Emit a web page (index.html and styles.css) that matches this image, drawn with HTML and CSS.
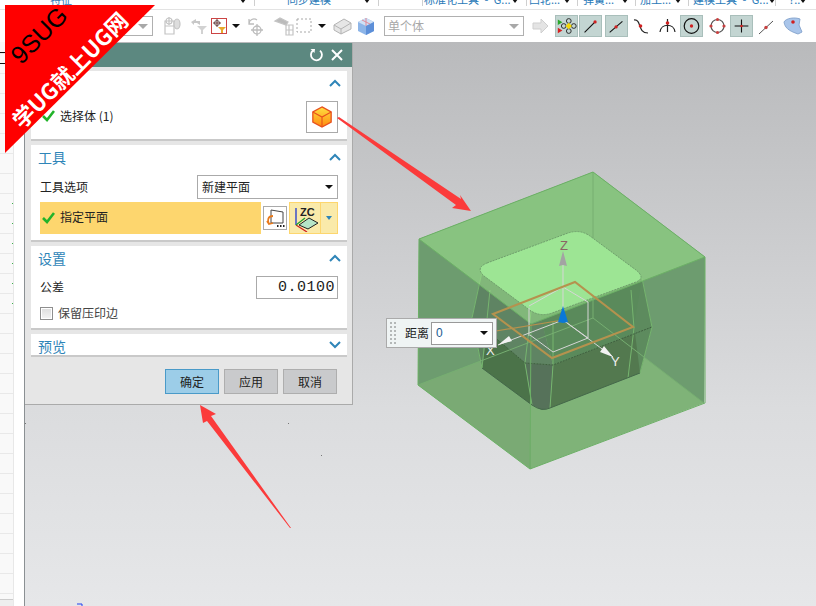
FILE: index.html
```html
<!DOCTYPE html>
<html lang="zh">
<head>
<meta charset="utf-8">
<title>修剪体</title>
<link rel="stylesheet" href="styles.css">
</head>
<body>
<div class="app">
  <div class="tabs">
    <div class="tab t1"><span class="tab-label">特征</span><i class="caret"></i></div>
    <div class="tab t2"><span class="tab-label">同步建模</span><i class="caret"></i></div>
    <div class="tab t3"></div>
    <div class="tab t4"><span class="tab-label">标准化工具 - G...</span><i class="caret"></i></div>
    <div class="tab t5"><span class="tab-label">凹轮...</span><i class="caret"></i></div>
    <div class="tab t6"><span class="tab-label">弹簧...</span><i class="caret"></i></div>
    <div class="tab t7"><span class="tab-label">加工...</span><i class="caret"></i></div>
    <div class="tab t8"><span class="tab-label">建模工具 - G...</span><i class="caret"></i></div>
    <div class="tab t9"><span class="tab-label">?..</span><i class="caret"></i></div>
  </div>

  <div class="toolbar">
    <div class="combo combo-a"><i class="caret gray"></i></div>
    <span class="ic ml7"><svg width="24" height="22" viewBox="0 0 24 22" fill="none" stroke="#c4c4c4" stroke-width="1.2"><path d="M5 6h9v13H5zM5 11h9M9 2v8"/><circle cx="9" cy="6" r="3"/><ellipse cx="17" cy="9" rx="3" ry="5" fill="#ddd"/></svg></span>
    <span class="ic ml2"><svg width="24" height="22" viewBox="0 0 24 22"><path d="M5 7l5-3v2h4v4l-3-2H8v2z" fill="#c8c8c8"/><path d="M11 11h10l-4 4v4h-2v-4z" fill="#d2d2d2"/></svg></span>
    <span class="ic-red ml1"><svg width="14" height="14" viewBox="0 0 14 14"><circle cx="5" cy="4" r="2.5" fill="none" stroke="#6b5a5a"/><path d="M5 0v8M1 4h8" stroke="#6b3b3b"/><path d="M6 8h8l-3 3v3H9v-3z" fill="#e8a92c"/></svg></span>
    <i class="caret ml5"></i>
    <span class="ic ml4"><svg width="24" height="22" viewBox="0 0 24 22" fill="none" stroke="#bdbdbd" stroke-width="1.3"><path d="M5 9a5 5 0 0 1 8-4M5 4v5h5"/><circle cx="13" cy="15" r="4"/><path d="M13 9v12M7 15h12"/></svg></span>
    <span class="ic ml4"><svg width="24" height="22" viewBox="0 0 24 22" fill="none" stroke="#c4c4c4" stroke-width="1.2"><path d="M3 6l5-3 8 4-2 3z" fill="#bbb"/><path d="M14 10h7v10h-7zM17 10v10M14 15h7"/></svg></span>
    <span class="ic-plain"><svg width="16" height="22" viewBox="0 0 16 22" fill="none" stroke="#a8a8a8"><path d="M1 4h14v13H1z" stroke-dasharray="2 2"/></svg></span>
    <i class="caret ml6"></i>
    <span class="ic ml4"><svg width="24" height="22" viewBox="0 0 24 22"><path d="M4 10l10-6 7 4v6l-10 5-7-4z" fill="#e6e6e6" stroke="#b4b4b4"/><path d="M4 10l7 4 10-6M11 14v5" fill="none" stroke="#b4b4b4"/></svg></span>
    <span class="ic"><svg width="24" height="22" viewBox="0 0 24 22"><path d="M4 7l8-4 8 4v9l-8 4-8-4z" fill="#8db5e8"/><path d="M4 7l8 4 8-4-8-4z" fill="#cfe0f5"/><path d="M12 11v9l8-4V7z" fill="#5d8fd8"/><path d="M8 5l8 4M12 3v8" stroke="#e08a9a" fill="none"/></svg></span>
    <div class="combo combo-b ml6"><span>单个体</span><i class="caret gray"></i></div>
    <span class="ic ml4"><svg width="24" height="22" viewBox="0 0 24 22"><path d="M5 8h8V4l7 7-7 7v-4H5z" fill="#e4e4e4" stroke="#cfcfcf"/></svg></span>
    <span class="ic on ml3"><svg width="23" height="22" viewBox="0 0 23 22"><path d="M2 4l5 3-5 3z" fill="#2aa82a"/><path d="M2 13l5 3-5 3z" fill="#d62020"/><g fill="none" stroke="#222"><circle cx="14" cy="5.500" r="2.600"/><circle cx="14" cy="16.500" r="2.600"/><circle cx="8.500" cy="11" r="2.600"/><circle cx="19.500" cy="11" r="2.600"/></g><path d="M14 7.500l3.500 3.500-3.500 3.500-3.500-3.500z" fill="#f5d90a"/></svg></span>
    <span class="ic on ml1"><svg width="23" height="22" viewBox="0 0 23 22"><path d="M5 18L16 7" stroke="#111" stroke-width="1.200"/><circle cx="16.500" cy="6.500" r="1.800" fill="#d02020"/></svg></span>
    <span class="ic on ml3"><svg width="23" height="22" viewBox="0 0 23 22"><path d="M4 18L18 6" stroke="#111" stroke-width="1.200"/><circle cx="11" cy="12" r="1.800" fill="#d02020"/></svg></span>
    <span class="ic ml1"><svg width="23" height="22" viewBox="0 0 23 22"><path d="M4 5c8-1 3 13 14 13" fill="none" stroke="#222" stroke-width="1.200"/><circle cx="10.500" cy="11" r="1.800" fill="#d02020"/></svg></span>
    <span class="ic ml2"><svg width="23" height="22" viewBox="0 0 23 22"><path d="M4 17c1-9 14-9 15 0M11.500 4v13" fill="none" stroke="#222" stroke-width="1.200"/><circle cx="11.500" cy="8" r="1.800" fill="#d02020"/></svg></span>
    <span class="ic on ml1"><svg width="23" height="22" viewBox="0 0 23 22"><circle cx="11.500" cy="11" r="8" fill="none" stroke="#111" stroke-width="1.300"/><circle cx="11.500" cy="11" r="1.800" fill="#d02020"/></svg></span>
    <span class="ic ml2"><svg width="23" height="22" viewBox="0 0 23 22"><circle cx="11.500" cy="11" r="6.500" fill="none" stroke="#555" stroke-width="1.200"/><g fill="#c84040"><circle cx="11.500" cy="4.500" r="1.600"/><circle cx="11.500" cy="17.500" r="1.600"/><circle cx="5" cy="11" r="1.600"/><circle cx="18" cy="11" r="1.600"/></g></svg></span>
    <span class="ic on ml1"><svg width="23" height="22" viewBox="0 0 23 22"><path d="M11.500 4v14M4 11h15" stroke="#111" stroke-width="1.200"/><circle cx="11.500" cy="11" r="1.500" fill="#d02020"/></svg></span>
    <span class="ic ml2"><svg width="23" height="22" viewBox="0 0 23 22"><path d="M3 19L17 6" stroke="#555"/><circle cx="10" cy="12.500" r="1.700" fill="#c84040"/></svg></span>
    <span class="ic ml2"><svg width="24" height="22" viewBox="0 0 24 22"><path d="M3 7c2-4 11-5 16-3l-1 6 3 7-4 2C12 17 4 15 3 7z" fill="#a9c5ea" stroke="#8aa8d0"/><circle cx="12" cy="7" r="1.800" fill="#d02020"/></svg></span>
  </div>

  <div class="main">
    <aside class="side">
      <div class="side-grid"><i class="rule r1"></i><i class="rule r2"></i></div>
      <div class="side-strip"></div>
    </aside>
    <div class="view">
      <svg class="scene" viewBox="25 42 791 564" width="791" height="564">
        <!-- outer block -->
        <polygon points="419,239 593,172 705,257 704,403 530,469 418,385" fill="#7fb378"/>
        <polygon points="418,385 593,318 704,403 705,257 593,172 419,239" fill="#6d9c6f"/>
        <polygon points="418,385 531,342 531,469" fill="#7aaa74"/>
        <!-- inner body -->
        <polygon points="482,272 540,315 553,365 525,363 472,318" fill="#5f8463"/>
        <polygon points="540,315 642,278 652,327 553,365" fill="#5a8a5b"/>
        <polygon points="472,318 525,363 532,405 482,368" fill="#4b7349"/>
        <polygon points="525,363 553,365 550,408 542,410 532,405" fill="#56725a"/>
        <polygon points="553,365 652,327 640,373 550,408" fill="#53794f"/>
        <polygon points="472,318 482,272 490,320 482,368" fill="#5e8463" opacity=".8"/>
        <polygon points="642,278 652,327 640,373 634,325" fill="#5d8b5e"/>
        <g fill="none" stroke="#76b56f" stroke-width="1">
          <path d="M482 272L472 318L482 368M642 278L652 327L640 373M531 312L525 363L532 405M553 322L553 365L550 408M490 290L482 368M631 290L634 328L628 378"/>
          <path d="M472 318L525 363L553 365L652 327" stroke="#3f5f3f" stroke-dasharray="2 1"/>
          <path d="M482 368L532 405Q542 412 550 408L640 373" stroke="#44684a"/>
        </g>
        <!-- translucent top of block -->
        <polygon points="419,239 593,172 705,257 531,324" fill="#a3ea91" opacity=".5"/>
        <path d="M593 172V318M418 385L593 318L704 403" fill="none" stroke="#76ae71" stroke-width="1"/>
        <path d="M419 239L593 172L705 257V403L530 469L418 385ZM419 239L531 324L705 257M531 324L530 469" fill="none" stroke="#6cb066" stroke-width="1"/>
        <!-- top face of body -->
        <path d="M487 263L568 233Q580 229 590 236L636 270Q646 278 636 282L552 313Q541 317 531 311L484 276Q475 268 487 263Z" fill="#9de594" stroke="#6f9f6c" stroke-dasharray="2 1"/>
        <!-- csys -->
        <g fill="none" stroke="#d6d6d6" stroke-width="1">
          <path d="M563 265V320M529 308V336M529 306L563 287L588 302V338L553 352L530 335M563 320L588 338M563 320L498 345M563 320L613 357"/>
        </g>
        <path d="M493 314L575 282L633 327L552 358Z" fill="none" stroke="#b5924e" stroke-width="2"/>
        <path d="M563 320L490 332" stroke="#b5924e" stroke-width="1.200"/>
        <polygon points="563,251 567,266 563,265 559,266" fill="#a3a3a3"/>
        <polygon points="563,306 568,322 563,323 558,322" fill="#0a78d8"/>
        <polygon points="498,345 509,336 512,341" fill="#f2f2f2"/>
        <polygon points="613,357 600,352 604,346" fill="#f2f2f2"/>
        <text class="axis az" x="560" y="250">Z</text>
        <text class="axis ay" x="611" y="366">Y</text>
        <text class="axis ay" x="486" y="355">X</text>
        <!-- dots -->
        <g fill="#777"><rect x="25" y="423" width="1" height="1"/><rect x="288" y="423" width="1" height="1"/><rect x="321" y="455" width="1" height="1"/></g>
        <path d="M77 604h5v2" fill="none" stroke="#2040f0"/>
      </svg>

      <div class="float">
        <span class="grip"></span>
        <span class="float-label">距离</span>
        <div class="float-select"><span>0</span><i class="caret"></i></div>
      </div>

      <section class="dialog">
        <header class="dlg-title">
          <svg width="16" height="16" viewBox="0 0 16 16"><path d="M5 3.500A5.500 5.500 0 1 0 12 3.600" fill="none" stroke="#fff" stroke-width="1.800"/><path d="M2.500 2l4.500 0 -.5 4z" fill="#fff"/></svg>
          <svg width="14" height="14" viewBox="0 0 14 14"><path d="M2 2l10 10M12 2L2 12" stroke="#fff" stroke-width="2"/></svg>
        </header>
        <div class="panel p-body">
          <div class="panel-head"><span class="panel-title"></span><svg class="chev" width="12" height="8" viewBox="0 0 12 8"><path d="M1 7l5-5 5 5" fill="none" stroke="#2f85b8" stroke-width="2"/></svg></div>
          <div class="row row-body">
            <span class="check"><svg width="13" height="12" viewBox="0 0 13 12"><path d="M1 6l4 4 7-9" fill="none" stroke="#22b32a" stroke-width="2.600"/></svg></span>
            <span class="label">选择体 (1)</span>
            <span class="pick"><svg width="22" height="24" viewBox="0 0 24 24"><defs><linearGradient id="cube" x1="0" y1="0" x2="0" y2="1"><stop offset="0" stop-color="#ffe040"/><stop offset="1" stop-color="#ff8a10"/></linearGradient></defs><path d="M12 1l10 5.500v11L12 23 2 17.500v-11z" fill="url(#cube)" stroke="#e8501c" stroke-width="1.400"/><path d="M2 6.500l10 5.500 10-5.500M12 12v11" fill="none" stroke="#e8501c" stroke-width="1.200"/></svg></span>
          </div>
        </div>
        <div class="panel p-tool">
          <div class="panel-head"><span class="panel-title">工具</span><svg class="chev" width="12" height="8" viewBox="0 0 12 8"><path d="M1 7l5-5 5 5" fill="none" stroke="#2f85b8" stroke-width="2"/></svg></div>
          <div class="row row-opt">
            <span class="label">工具选项</span>
            <div class="select"><span class="label">新建平面</span><i class="caret"></i></div>
          </div>
          <div class="row row-plane">
            <div class="plane-bar">
              <svg width="13" height="12" viewBox="0 0 13 12"><path d="M1 6l4 4 7-9" fill="none" stroke="#22b32a" stroke-width="2.600"/></svg>
              <span class="label">指定平面</span>
            </div>
            <span class="plane-btn"><svg width="22" height="22" viewBox="0 0 22 22"><path d="M7 3l12 2v11H7z" fill="#fff" stroke="#444"/><path d="M9 9C4 9 3 13 5 17l4-1M5 17l-2-3" fill="none" stroke="#e87a1c" stroke-width="1.800"/><path d="M13 19h1.500M16 19h1.500M19 19h1.500" stroke="#222" stroke-width="1.800"/></svg></span>
            <div class="plane-split">
              <span class="zc"><svg width="28" height="28" viewBox="0 0 28 28"><path d="M5 4v17" stroke="#2038d0" stroke-width="1.300"/><path d="M5 21l11 7" stroke="#d02020" stroke-width="1.300"/><path d="M5 21l9-7" stroke="#22a030" stroke-width="1.300"/><path d="M8 21l10-7 9 5-10 6z" fill="#b5e5c8" stroke="#222"/><text class="zc-text" x="9" y="12">ZC</text></svg></span>
              <span class="zc-drop"><i class="caret blue"></i></span>
            </div>
          </div>
        </div>
        <div class="panel p-set">
          <div class="panel-head"><span class="panel-title">设置</span><svg class="chev" width="12" height="8" viewBox="0 0 12 8"><path d="M1 7l5-5 5 5" fill="none" stroke="#2f85b8" stroke-width="2"/></svg></div>
          <div class="row row-tol">
            <span class="label">公差</span>
            <div class="input"><span>0.0100000</span></div>
          </div>
          <label class="row row-chk"><span class="box"></span><span class="label muted">保留压印边</span></label>
        </div>
        <div class="panel p-prev">
          <div class="panel-head"><span class="panel-title">预览</span><svg class="chev" width="12" height="8" viewBox="0 0 12 8"><path d="M1 1l5 5 5-5" fill="none" stroke="#2f85b8" stroke-width="2"/></svg></div>
        </div>
        <footer class="actions">
          <button class="btn primary">确定</button>
          <button class="btn">应用</button>
          <button class="btn">取消</button>
        </footer>
      </section>

      <!-- red callout arrows lie over the dialog and the model -->
      <svg class="scene" viewBox="25 42 791 564" width="791" height="564">
        <polygon points="337,118 339,117 461,199 460,195 471,211 452,208 456,205" fill="#fb3b3b"/>
        <polygon points="291,528 290,528 207,421 203,423 200,405 216,414 211,416" fill="#fb3b3b"/>
      </svg>
    </div>
  </div>

  <div class="banner">
    <span class="b-top">9SUG</span>
    <span class="b-main">学UG就上UG网</span>
  </div>
</div>
</body>
</html>
```

FILE: styles.css
```css
* { box-sizing: border-box; }
html, body { margin: 0; padding: 0; }
body {
  width: 816px;
  height: 606px;
  overflow: hidden;
  background: #fff;
  font-family: "Noto Sans CJK SC", "Liberation Sans", sans-serif;
  font-size: 12px;
  color: #222;
}
.app { position: relative; width: 816px; height: 606px; display: flex; flex-direction: column; overflow: hidden; }

.caret { display: inline-block; width: 0; height: 0; border-left: 4px solid transparent; border-right: 4px solid transparent; border-top: 4px solid #111; flex: none; }
.caret.gray { border-top-color: #a8a8a8; border-left-width: 5px; border-right-width: 5px; border-top-width: 5px; }
.caret.blue { border-top-color: #2f85b8; border-left-width: 3px; border-right-width: 3px; border-top-width: 4px; }

/* ribbon tabs, clipped at the top of the crop */
.tabs { height: 10px; flex: none; display: flex; overflow: hidden; border-bottom: 1px solid #e3e3e3; background: #fff; }
.tab { height: 6px; display: flex; align-items: flex-end; border-right: 1px solid #cfcfcf; position: relative; flex: none; overflow: hidden; }
.tab-label { font-size: 11px; line-height: 14px; color: #2a7ab8; white-space: nowrap; flex: none; word-spacing: 3px; }
.tab .caret { margin-left: auto; margin-bottom: 3px; border-left-width: 3px; border-right-width: 3px; }
.t1 { width: 255px; padding: 0 8px 0 50px; }
.t2 { width: 124px; padding: 0 8px 0 32px; }
.t3 { width: 44px; }
.t4 { width: 104px; padding: 0 8px 0 1px; }
.t5 { width: 51px; padding: 0 7px 0 2px; }
.t6 { width: 58px; padding: 0 7px 0 5px; }
.t7 { width: 53px; padding: 0 7px 0 4px; }
.t8 { width: 87px; padding: 0 7px 0 4px; }
.t9 { flex: 1; border-right: 0; padding: 0 10px 0 13px; }

/* toolbar */
.toolbar { height: 32px; flex: none; display: flex; align-items: center; padding-left: 40px; background: #fff; }
.combo { height: 20px; border: 1px solid #b0b0b0; background: #fff; display: flex; align-items: center; justify-content: flex-end; padding: 0 4px 0 3px; color: #a8a8a8; flex: none; }
.combo span { margin-right: auto; line-height: 18px; }
.combo-a { width: 113px; }
.combo-b { width: 140px; }
.ic { width: 24px; height: 22px; display: flex; align-items: center; justify-content: center; flex: none; }
.ic.on { width: 23px; background: #c3d5d2; border: 1px solid #a9bfbb; }
.ic-red { width: 16px; height: 16px; border: 1px solid #c44; display: flex; align-items: center; justify-content: center; flex: none; }
.ic-plain { width: 16px; height: 22px; display: flex; align-items: center; flex: none; }
.ml1 { margin-left: 1px; } .ml2 { margin-left: 2px; } .ml3 { margin-left: 3px; }
.ml4 { margin-left: 4px; } .ml5 { margin-left: 5px; } .ml6 { margin-left: 6px; } .ml7 { margin-left: 7px; }

/* workspace */
.main { flex: 1; display: flex; min-height: 0; }
.side { width: 25px; flex: none; display: flex; background: #fff; border-right: 1px solid #8b9093; }
.side-grid {
  width: 14px; position: relative;
  border-right: 1px solid #e8e8e8;
  background: linear-gradient(to bottom, #f9f9f9 0, #f9f9f9 19px, #e9e9e9 19px, #e9e9e9 20px) 0 12px / 100% 20px;
}
.side-grid::after {
  content: ""; position: absolute; left: 12px; top: 161px; width: 1px; height: 102px;
  background: repeating-linear-gradient(to bottom, #3cb04a 0, #3cb04a 1px, transparent 1px, transparent 20px);
}
.side-grid::before {
  content: ""; position: absolute; left: 0; bottom: 0; width: 13px; height: 6px;
  background: #eee; border-top: 1px solid #ccc;
}
.side-strip { flex: 1; background: #fff; }
.rule { position: absolute; left: 0; width: 5px; height: 1px; background: #111; }
.r1 { top: 10px; } .r2 { top: 21px; }

.view { flex: 1; position: relative; background: linear-gradient(to bottom, #b9babc 0, #c6c7c9 25%, #dbdcde 65%, #e6e7e9 100%); }
.scene { position: absolute; left: 0; top: 0; display: block; pointer-events: none; }
.axis { font: 13px "Liberation Sans", sans-serif; }
.az { fill: #8a6464; }
.ay { fill: #eee; }

/* distance popup */
.float { position: absolute; left: 361px; top: 276px; width: 111px; height: 30px; display: flex; align-items: center; background: #eff4f4; border: 1px solid #aaa; }
.grip { width: 8px; height: 24px; margin-left: 2px; background: radial-gradient(circle, #b4b8b8 1px, transparent 1.200px) 0 0 / 4px 4px; }
.float-label { margin-left: 8px; font-size: 12px; padding-bottom: 2px; }
.float-select { margin-left: 2px; width: 62px; height: 23px; background: #fff; border: 1px solid #999; display: flex; align-items: center; justify-content: space-between; padding: 0 4px; color: #1a5a90; font-family: "Liberation Sans", sans-serif; }

/* dialog */
.dialog { position: absolute; left: 0; top: 1px; width: 328px; height: 362px; background: #e6e6e6; border: 1px solid #aaa; border-top: 0; border-left: 0; display: flex; flex-direction: column; padding: 0 5px 0 6px; }
.dlg-title { height: 24px; margin: 0 -5px 0 -6px; background: #5c8880; flex: none; display: flex; align-items: center; justify-content: flex-end; gap: 6px; padding-right: 8px; }
.panel { background: #fff; border-bottom: 2px solid #c9c9c9; margin-top: 4px; flex: none; }
.p-body { height: 70px; }
.p-tool { height: 97px; }
.p-set { height: 84px; }
.p-prev { height: 23px; }
.panel-head { height: 26px; display: flex; align-items: center; justify-content: space-between; padding: 0 6px 0 7px; }
.p-prev .panel-head { height: 22px; }
.panel-title { font-size: 14px; line-height: 20px; color: #2f85b8; margin-bottom: 2px; }
.p-prev .panel-title { margin-bottom: 0; margin-top: 2px; }
.chev { margin-bottom: 2px; }
.p-prev .chev { margin-bottom: 0; }
.label { padding-bottom: 2px; }
.row { display: flex; align-items: center; }
.row-body { padding: 4px 9px 0 11px; }
.row-body .label { padding-bottom: 4px; }
.check { margin-right: 5px; display: flex; padding-bottom: 2px; }
.pick { margin-left: auto; width: 32px; height: 32px; border: 1px solid #aaa; display: flex; align-items: center; justify-content: center; }
.row-opt { padding: 4px 9px 0 9px; justify-content: space-between; }
.select { width: 141px; height: 24px; border: 1px solid #aaa; display: flex; align-items: center; justify-content: space-between; padding: 0 4px 0 4px; }
.row-plane { margin: 3px 9px 0 9px; height: 32px; gap: 2px; }
.plane-bar { width: 221px; height: 32px; background: #fdd66e; display: flex; align-items: center; padding-left: 2px; gap: 5px; }
.plane-bar .label { padding-bottom: 4px; }
.plane-btn { width: 24px; height: 24px; border: 1px solid #aaa; background: #fff; display: flex; align-items: center; justify-content: center; }
.plane-split { width: 49px; height: 32px; display: flex; background: #faeaaa; border: 1px solid #fdd66e; }
.zc { width: 31px; display: flex; align-items: center; justify-content: center; border-right: 1px solid #fdd66e; }
.zc-drop { flex: 1; display: flex; align-items: center; justify-content: center; }
.zc-text { font: bold 11px "Liberation Sans", sans-serif; fill: #222; }
.row-tol { padding: 4px 9px 0 9px; justify-content: space-between; }
.input { width: 82px; height: 23px; border: 1px solid #aaa; display: flex; align-items: center; padding-left: 21px; }
.input span { display: block; width: 57px; overflow: hidden; font: 15px "Liberation Mono", monospace; letter-spacing: .5px; white-space: nowrap; }
.row-chk { padding: 5px 9px 0 9px; gap: 5px; }
.box { width: 13px; height: 13px; border: 1px solid #8e8e8e; background: linear-gradient(#ddd, #f4f4f4); box-shadow: inset 0 0 0 1px #fff; }
.muted { color: #444; }
.actions { display: flex; justify-content: flex-end; gap: 5px; padding: 12px 10px 0 0; }
.btn { width: 54px; height: 25px; padding: 0; font: 12px "Noto Sans CJK SC", sans-serif; color: #222; background: #c9cacc; border: 1px solid #aeaeae; }
.btn.primary { background: #9ccde8; border-color: #4a9ac8; }

/* corner banner */
.banner { position: absolute; left: 5px; top: 5px; width: 150px; height: 148px; background: #ff0000; clip-path: polygon(0 0, 100% 0, 0 100%); overflow: hidden; }
.b-top, .b-main { position: absolute; white-space: nowrap; transform: rotate(-45deg); transform-origin: center; line-height: 1; }
.b-top { left: 1px; top: 20px; width: 62px; text-align: center; font: 25px/1 "Liberation Sans", sans-serif; color: #000; }
.b-main { left: -12px; top: 54px; width: 150px; text-align: center; font: bold 22px/1 "Noto Sans CJK SC", sans-serif; color: #fff; }
```
